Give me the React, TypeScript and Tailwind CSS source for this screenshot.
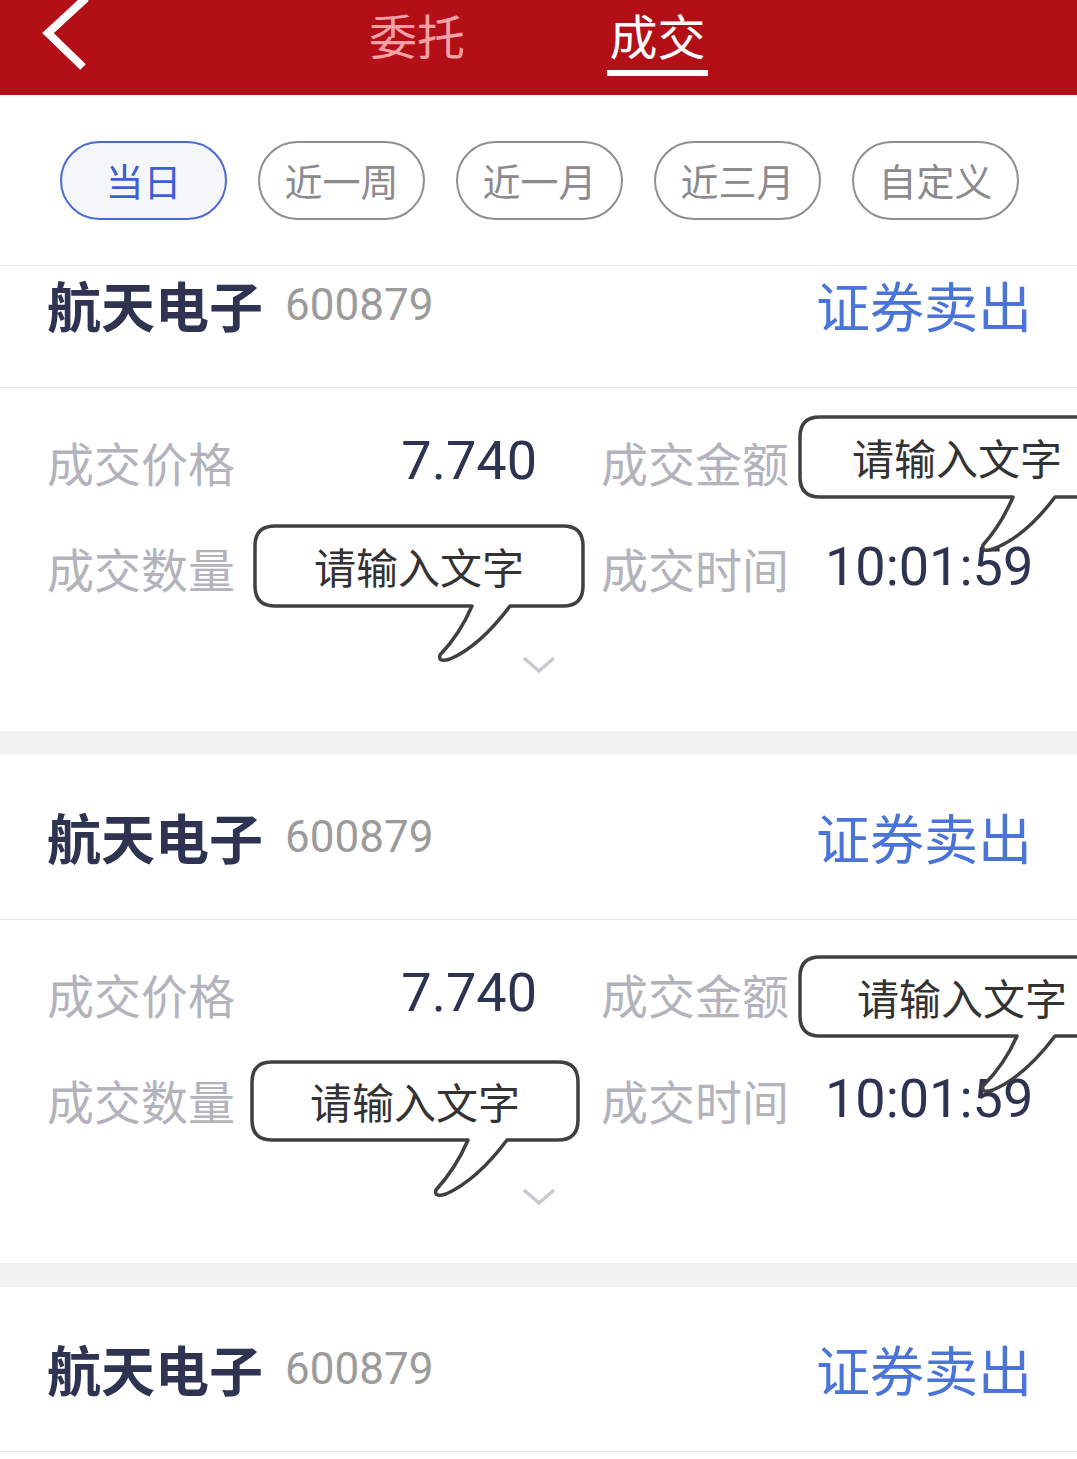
import React from "react";

const CJK = "font-['Noto_Sans_CJK_SC',sans-serif]";
const NUM = "font-['Roboto','Noto_Sans_CJK_SC',sans-serif]";

type Bubble = {
  pos: string; // tailwind position classes (rect top-left, relative to card body)
  w: number;
  h: number;
  tl: number;
  tr: number;
  ax: number;
  ay: number;
  text: string; // tailwind classes for text placement
};

function bubblePath({ w, h, tl, tr, ax, ay }: Bubble) {
  const p = 4;
  const r = 20;
  return [
    `M ${p + r} ${p}`,
    `H ${p + w - r}`,
    `Q ${p + w} ${p} ${p + w} ${p + r}`,
    `V ${p + h - r}`,
    `Q ${p + w} ${p + h} ${p + w - r} ${p + h}`,
    `H ${p + tr}`,
    `Q ${p + tr - 30} ${p + h + 40} ${p + ax + 8} ${p + ay - 2}`,
    `Q ${p + ax - 4} ${p + ay + 2} ${p + ax - 2} ${p + ay - 6}`,
    `Q ${p + tl - 12} ${p + h + 28} ${p + tl} ${p + h}`,
    `H ${p + r}`,
    `Q ${p} ${p + h} ${p} ${p + h - r}`,
    `V ${p + r}`,
    `Q ${p} ${p} ${p + r} ${p}`,
    "Z",
  ].join(" ");
}

function SpeechBubble({ b }: { b: Bubble }) {
  return (
    <div className={`absolute ${b.pos}`} style={{ width: b.w, height: b.h }}>
      <svg
        className="pointer-events-none absolute -left-1 -top-1 overflow-visible"
        width={b.w + 8}
        height={b.ay + 12}
      >
        <path d={bubblePath(b)} fill="#fff" stroke="#404040" strokeWidth={3.5} strokeLinejoin="round" />
      </svg>
      <div className={`relative flex h-full items-center ${b.text}`}>
        <span className={`${CJK} whitespace-nowrap text-[42px] leading-none text-[#333]`}>请输入文字</span>
      </div>
    </div>
  );
}

function Header() {
  return (
    <div className="grid h-[95px] grid-cols-[1fr_auto_1fr] bg-[#b30f17]">
      <div>
        <svg width="56" height="70" className="ml-[40px]" viewBox="0 0 56 70">
          <polyline points="46,-2 8,33 43,67" fill="none" stroke="#fff" strokeWidth="8" />
        </svg>
      </div>
      <div className={`flex gap-[142px] pt-[10px] ${CJK}`}>
        <div className="flex flex-col items-center">
          <span className="text-[48px] leading-none text-[#f3a1a6]">委托</span>
        </div>
        <div className="flex flex-col items-center">
          <span className="text-[48px] leading-none text-white">成交</span>
          <div className="mt-[12px] h-[6px] w-[101px] bg-white" />
        </div>
      </div>
      <div />
    </div>
  );
}

const ranges = ["当日", "近一周", "近一月", "近三月", "自定义"];

function Filters() {
  return (
    <div className="flex h-[171px] items-center gap-[31px] border-b border-[#e8e8e8] pl-[60px]">
      {ranges.map((r, i) => (
        <div
          key={r}
          className={
            i === 0
              ? `flex h-[79px] w-[167px] items-center justify-center rounded-full border-2 border-[#4b6bd2] bg-[#f5f6f8] text-[38px] leading-none text-[#3e5fcf] ${CJK}`
              : `flex h-[79px] w-[167px] items-center justify-center rounded-full border-2 border-[#8e8e93] text-[38px] leading-none text-[#8a8a8f] ${CJK}`
          }
        >
          {r}
        </div>
      ))}
    </div>
  );
}

function CardHeader() {
  return (
    <div className="flex h-[165px] items-center justify-between border-b border-[#e8e8e8] pl-[47px] pr-[45px]">
      <div className="flex items-center gap-[22px]">
        <span className={`${CJK} text-[54px] font-bold leading-none text-[#2d3350]`}>航天电子</span>
        <span className={`${NUM} text-[44px] leading-none text-[#9b9b9b]`}>600879</span>
      </div>
      <span className={`${CJK} text-[54px] leading-none text-[#4a74d8]`}>证券卖出</span>
    </div>
  );
}

function Label({ children }: { children: React.ReactNode }) {
  return (
    <span className={`${CJK} shrink-0 whitespace-nowrap text-[47px] leading-none text-[#b3b3bb]`}>{children}</span>
  );
}

function Value({ children }: { children: React.ReactNode }) {
  return (
    <span className={`${NUM} shrink-0 whitespace-nowrap text-[54px] leading-none text-[#2d3350]`}>{children}</span>
  );
}

function CardBody({ bubbles }: { bubbles: Bubble[] }) {
  return (
    <div className="relative h-[343px] pl-[47px] pt-[20px]">
      <div className="grid grid-cols-[490px_1fr] gap-x-[64px]">
        <div className="flex h-[106px] items-center justify-between">
          <Label>成交价格</Label>
          <Value>7.740</Value>
        </div>
        <div className="flex h-[106px] items-center gap-[36px]">
          <Label>成交金额</Label>
        </div>
        <div className="flex h-[106px] items-center justify-between">
          <Label>成交数量</Label>
        </div>
        <div className="flex h-[106px] items-center gap-[36px]">
          <Label>成交时间</Label>
          <Value>10:01:59</Value>
        </div>
      </div>
      <div className="flex justify-center pr-[47px] pt-[36px]">
        <svg width="34" height="18" viewBox="0 0 34 18">
          <polyline points="2,2 17,15 32,2" fill="none" stroke="#c9c9d0" strokeWidth="3.5" />
        </svg>
      </div>
      {bubbles.map((b, i) => (
        <SpeechBubble key={i} b={b} />
      ))}
    </div>
  );
}

const card1: Bubble[] = [
  { pos: "left-[800px] top-[29px]", w: 300, h: 80, tl: 213, tr: 255, ax: 185, ay: 134, text: "pl-[52px]" },
  { pos: "left-[255px] top-[138px]", w: 328, h: 80, tl: 217, tr: 255, ax: 187, ay: 135, text: "justify-center" },
];

const card2: Bubble[] = [
  { pos: "left-[800px] top-[37px]", w: 300, h: 79, tl: 217, tr: 255, ax: 185, ay: 135, text: "pl-[57px]" },
  { pos: "left-[252px] top-[142px]", w: 326, h: 78, tl: 216, tr: 255, ax: 186, ay: 134, text: "justify-center" },
];

function Gap() {
  return <div className="h-[24px] bg-[#f2f2f2]" />;
}

export default function App() {
  return (
    <div className="h-[1459px] w-[1077px] overflow-hidden bg-white">
      <Header />
      <Filters />
      <div className="overflow-hidden">
        <div className="-mt-[43px]">
          <CardHeader />
          <CardBody bubbles={card1} />
          <Gap />
          <CardHeader />
          <CardBody bubbles={card2} />
          <Gap />
          <CardHeader />
        </div>
      </div>
    </div>
  );
}
